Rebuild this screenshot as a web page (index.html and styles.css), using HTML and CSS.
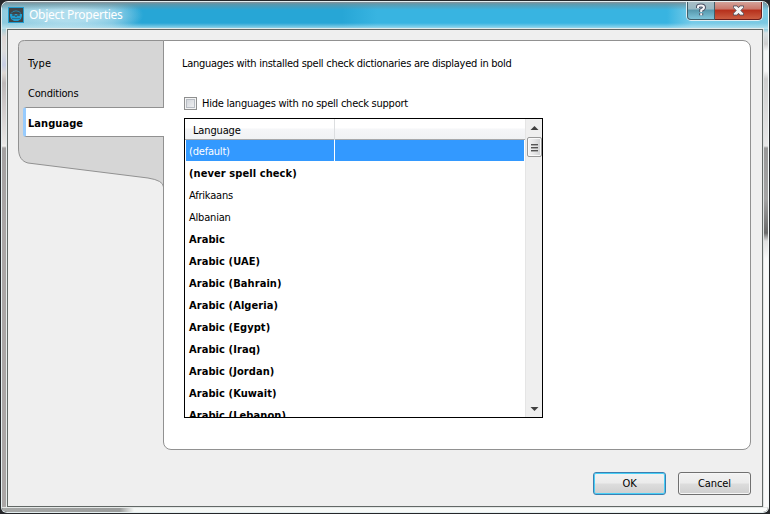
FILE: index.html
```html
<!DOCTYPE html>
<html lang="en">
<head>
<meta charset="utf-8">
<title>Object Properties</title>
<link rel="stylesheet" href="styles.css">
</head>
<body>
<div class="window">
  <header class="titlebar">
    <svg class="app-icon" width="16" height="16" viewBox="0 0 16 16">
      <rect width="16" height="16" fill="#229ed0"/>
      <rect x="1" y="1" width="14" height="14" fill="#404447"/>
      <path d="M3 6.500a5.500 4.500 0 0 1 10 0" fill="none" stroke="#2386ab"/>
      <path d="M2 7h12v2l-1 3-3 2H6l-3-2-1-3z" fill="#229ed0"/>
      <path d="M4.500 7.500h2v1h-2zM9.500 7.500h2v1h-2zM7.500 8.500h1v1h-1zM4 11.500h8" fill="#404447" stroke="#404447" stroke-width=".5"/>
    </svg>
    <h1 class="title">Object Properties</h1>
    <div class="caption-buttons">
      <button class="help" aria-label="Help">
        <svg width="12" height="14" viewBox="0 0 12 14" fill="none">
          <path d="M3 5V3.800Q3 2.500 6 2.500T9 4.500Q9 6 6.200 7.200V9M6.200 10.300v2" stroke="#4c5365" stroke-width="4"/>
          <path d="M3 5V3.800Q3 2.500 6 2.500T9 4.500Q9 6 6.200 7.200V9M6.200 10.300v2" stroke="#f5f5f7" stroke-width="2"/>
        </svg>
      </button>
      <button class="close" aria-label="Close">
        <svg width="11" height="11" viewBox="0 0 12 11">
          <path d="M.5.5h4L6 2.500 7.500.5h4v2L8.500 5.500l3 3v2h-4L6 8.500l-1.500 2h-4v-2l3-3-3-3z" fill="#f5f5f5" stroke="#53535f"/>
        </svg>
      </button>
    </div>
  </header>
  <div class="frame-middle">
    <div class="edge edge-left"></div>
    <main class="client">
      <div class="pages">
        <nav class="tabs">
          <svg class="tabs-shape" width="146" height="148" viewBox="0 0 146 148">
            <path d="M145.500.5H6.500Q.5.500.5 6.500V108C.5 117 4 121.500 10 123L130 138Q145.500 140.500 145.500 147z" fill="#d6d6d6" stroke="#919191"/>
          </svg>
          <div class="tab-list">
            <a class="tab t-type">Type</a>
            <a class="tab t-cond">Conditions</a>
            <a class="tab selected">Language</a>
          </div>
        </nav>
        <section class="panel">
          <p class="note">Languages with installed spell check dictionaries are displayed in bold</p>
          <label class="option"><span class="box"></span><span class="option-text">Hide languages with no spell check support</span></label>
          <div class="listbox">
            <div class="list">
              <div class="list-head"><span>Language</span><span></span></div>
              <div class="row current"><span>(default)</span><span></span></div>
              <div class="row bold">(never spell check)</div>
              <div class="row">Afrikaans</div>
              <div class="row">Albanian</div>
              <div class="row bold">Arabic</div>
              <div class="row bold">Arabic (UAE)</div>
              <div class="row bold">Arabic (Bahrain)</div>
              <div class="row bold">Arabic (Algeria)</div>
              <div class="row bold">Arabic (Egypt)</div>
              <div class="row bold">Arabic (Iraq)</div>
              <div class="row bold">Arabic (Jordan)</div>
              <div class="row bold">Arabic (Kuwait)</div>
              <div class="row bold">Arabic (Lebanon)</div>
            </div>
            <div class="scrollbar">
              <svg class="arrow" width="15" height="18" viewBox="0 0 15 18"><path d="M3.500 11L7.500 7l4 4z" fill="#404040"/></svg>
              <div class="thumb"><i></i><i></i><i></i></div>
              <svg class="arrow down" width="15" height="18" viewBox="0 0 15 18"><path d="M3.500 8h8l-4 4z" fill="#404040"/></svg>
            </div>
          </div>
        </section>
      </div>
      <footer class="actions">
        <button class="btn default">OK</button>
        <button class="btn">Cancel</button>
      </footer>
    </main>
    <div class="edge edge-right"></div>
  </div>
  <div class="edge-bottom"></div>
</div>
</body>
</html>
```
FILE: styles.css
```css
* { box-sizing: border-box; }

body {
  margin: 0;
  background: #25272a;
  font: 11px/14px "DejaVu Sans Condensed", "DejaVu Sans", sans-serif;
  color: #000;
  overflow: hidden;
}

button { font: inherit; padding: 0; }

.window {
  display: flex;
  flex-direction: column;
  width: 768px;
  height: 512px;
  margin: 1px 0 0 1px;
  border: 1px solid #e4eef0;
  border-right-color: #f4fafa;
  border-radius: 7px 7px 6px 6px;
  overflow: hidden;
}

.titlebar {
  display: flex;
  flex: 0 0 27px;
  align-items: flex-start;
  padding-left: 6px;
  background:
    linear-gradient(#8b9299 0, rgba(110, 145, 155, .75) 2px, rgba(90, 160, 185, 0) 8px, rgba(255, 255, 255, 0) 21px, rgba(205, 235, 243, .75) 27px),
    radial-gradient(ellipse 72px 19px at 70px 13px, rgba(205, 235, 245, .65) 35%, rgba(190, 230, 245, 0)),
    linear-gradient(90deg, #8fcbdf 0, #68bddd 110px, #27a6d6 140px, #27a6d6 340px, #38b4e1 375px, #38b4e1 665px, #76cbe8 690px, #7cc9e2 100%);
}

.app-icon { margin-top: 5px; }

.title {
  margin: 4px 0 0 5px;
  font: 12px/17px "Noto Sans", "Open Sans", sans-serif;
  color: #fff;
  letter-spacing: -.27px;
}

.caption-buttons {
  display: flex;
  width: 77px;
  height: 20px;
  margin: -1px 5px 0 auto;
  border: 1px solid #e1eef2;
  border-top: 0;
  border-radius: 0 0 5px 5px;
}

.help, .close {
  display: flex;
  align-items: center;
  justify-content: center;
  height: 19px;
  border: 1px solid #405d68;
  border-top: 0;
}

.help {
  width: 28px;
  border-radius: 0 0 0 4px;
  background: linear-gradient(#a9bec5 0, #98b9c3 45%, #5698ad 50%, #80c5da 100%);
}

.close {
  width: 47px;
  border-color: #6c1d1b;
  border-left: 0;
  border-radius: 0 0 4px 0;
  background: linear-gradient(#d5a89f 0, #c9776a 45%, #b62f1b 50%, #cb5d41 100%);
}

.frame-middle { display: flex; flex: 1; min-height: 0; }

.edge { border: solid #dfe4e4; border-width: 0; }

.edge-left {
  width: 5px;
  border-right-width: 1px;
  background: linear-gradient(#a9cfd9 0, #ddd6d4 8px, #dcdcdc 22px, #c7cee4 36px, #ded9d4 44px, #bdb8b8 54px, #d1cccc 80px, #e8e6e4 115px, #f1efed 117px, #a4a1a1 119px, #aaa6a6 200px, #aaa6a6 100%);
}

.edge-right {
  width: 5px;
  border-left-width: 1px;
  background: linear-gradient(#8dccde 0, #d9e1e3 4px, #cfcfcf 15px, #f7f7f7 22px, #f7f7f7 42px, #cfcfcf 50px, #e8e8e8 117px, #999 119px, #a4a4a4 170px, #696969 204px, #e0e0e0 212px, #fafafa 230px, #fafafa 100%);
}

.edge-bottom {
  flex: 0 0 5px;
  border-top: 1px solid #e4e7e6;
  background: linear-gradient(90deg, #a7a9a8 0, #9b9d9c 110px, #9b9d9c 118px, #f4f7f5 132px, #fbfdfc 100%);
}

.client {
  display: flex;
  flex: 1;
  flex-direction: column;
  padding: 10px 10px 0;
  border: 1px solid #626866;
  background: #efefef;
  outline: 1px solid #e4ebeb;
}

.pages { display: flex; }

.tabs { display: grid; flex: 0 0 145px; min-width: 0; grid-template-columns: 145px; align-content: start; }
.tabs-shape, .tab-list { grid-area: 1 / 1; }
.tab-list { padding: 7px 0 0 5px; z-index: 1; }

.tab {
  display: block;
  height: 30px;
  padding-left: 5px;
  line-height: 34px;
}

.t-type { letter-spacing: .2px; }
.t-cond { letter-spacing: -.2px; }

.tab.selected {
  margin-right: -1px;
  padding-left: 2px;
  border: 1px solid #919191;
  border-left: 3px solid #97cbfd;
  border-right: 0;
  border-radius: 3px 0 0 3px;
  background: #fff;
  font-weight: bold;
  line-height: 32px;
  letter-spacing: .06px;
}

.panel {
  width: 588px;
  height: 410px;
  padding: 16px 18px 0;
  border: 1px solid #919191;
  border-radius: 0 8px 8px 8px;
  background: #fff;
}

.note { margin: 0; white-space: nowrap; letter-spacing: -.27px; }

.option {
  display: flex;
  align-items: center;
  gap: 5px;
  margin: 25px 0 0 2px;
  white-space: nowrap;
  letter-spacing: -.24px;
}

.option-text { padding-top: 1px; margin-bottom: -1px; }

.box {
  width: 13px;
  height: 13px;
  border: 1px solid #8e8f8f;
  background: linear-gradient(135deg, #cbcfd5, #f6f6f6);
  box-shadow: inset 0 0 0 1px #f4f4f4, inset 0 0 0 2px #b8bdc4;
}

.listbox {
  display: flex;
  width: 359px;
  height: 300px;
  margin: 8px 0 0 2px;
  border: 1px solid #000;
  background: #fff;
}

.list { flex: 1; padding-left: 1px; overflow: hidden; }

.list-head, .current { display: grid; }

.list-head {
  height: 21px;
  margin-left: -1px;
  grid-template-columns: 150px 1fr;
  border-bottom: 1px solid #a7a8aa;
  background: linear-gradient(#fff 0, #fff 45%, #f5f6f8 50%, #f0f2f4 100%);
  line-height: 24px;
}

.list-head span:first-child { padding-left: 8px; border-right: 1px solid #dcdee0; letter-spacing: -.15px; }

.row {
  height: 22px;
  padding-left: 3px;
  line-height: 24px;
  white-space: nowrap;
  letter-spacing: -.2px;
}

.current {
  width: 338px;
  border-bottom: 1px solid #fff;
  background: #3399ff;
  color: #fff;
  grid-template-columns: 146px 1fr;
}

.current span:first-child { border-right: 1px solid #fff; }

.bold { font-weight: bold; letter-spacing: .08px; }

.scrollbar {
  display: flex;
  flex: 0 0 17px;
  flex-direction: column;
  padding-left: 1px;
  background: #efefef;
  border-left: 1px solid #e5e5e5;
}

.arrow { flex: none; }
.down { margin-top: auto; }

.thumb {
  display: flex;
  flex-direction: column;
  align-items: center;
  justify-content: center;
  gap: 2px;
  width: 15px;
  height: 20px;
  border: 1px solid #999;
  border-radius: 2px;
  background: linear-gradient(90deg, #f5f5f5, #e7e7e8 45%, #cfd0d2);
  box-shadow: inset 0 0 0 1px #fafafa;
}

.thumb i { width: 7px; height: 1px; background: #555; box-shadow: 0 1px #aaa; }

.actions {
  display: flex;
  justify-content: flex-end;
  gap: 12px;
  margin-top: 22px;
  padding-right: 1px;
}

.btn {
  width: 73px;
  height: 23px;
  padding-top: 1px;
  border: 1px solid #707070;
  border-radius: 3px;
  background: linear-gradient(#f2f2f2 0, #ebebeb 49%, #dddddd 51%, #cfcfcf 100%);
  box-shadow: inset 0 0 0 1px #f6f6f6;
  letter-spacing: -.1px;
}

.default {
  border-color: #3c7fb1;
  box-shadow: inset 0 0 0 1px #48cff6;
}
```
